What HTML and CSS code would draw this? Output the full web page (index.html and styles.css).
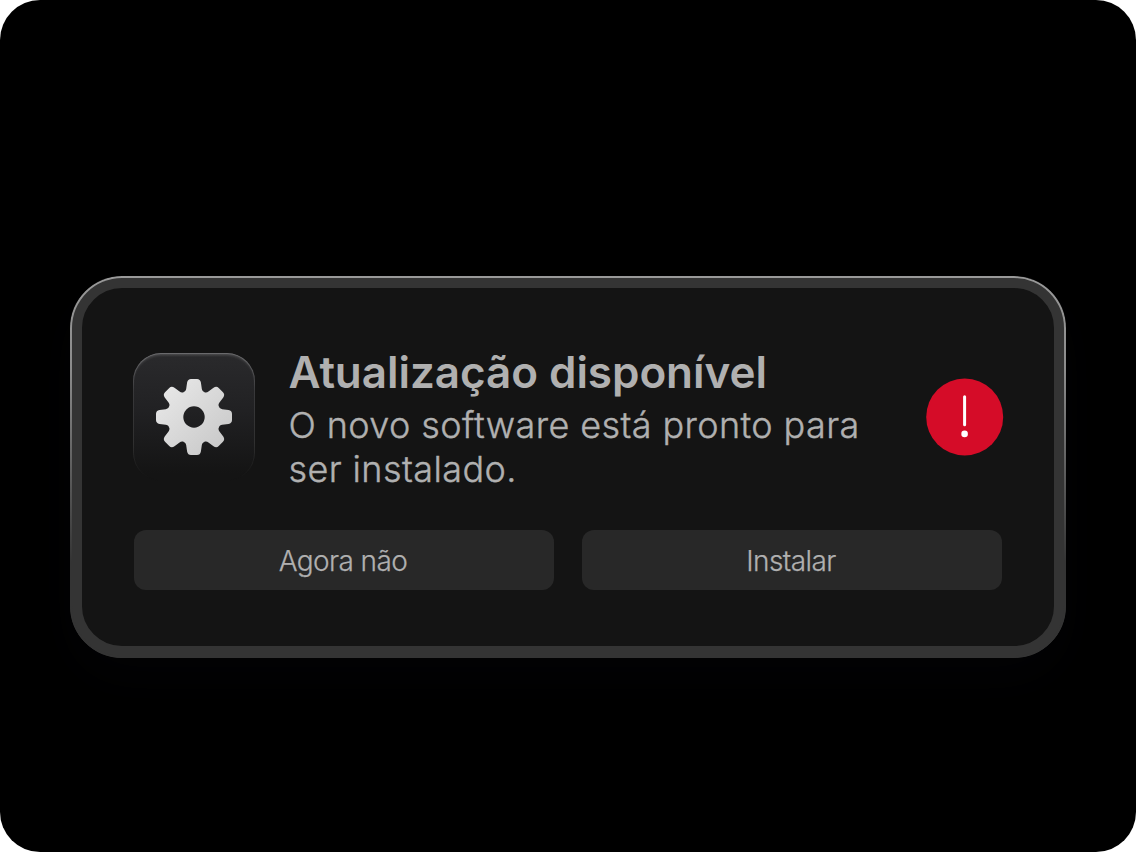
FILE: index.html
```html
<!doctype html>
<html lang="pt">
<head>
<meta charset="utf-8">
<title>Atualização disponível</title>
<link rel="stylesheet" href="styles.css">
</head>

<body>
<div class="screen">
	<div class="dialog">
		<div class="info">
			<div class="app-icon">
				<svg width="80" height="80" viewBox="-40 -40 80 80">
					<defs>
						<linearGradient id="metal" x1="0" y1="0" x2="1" y2="1">
							<stop offset="0.15" stop-color="#e6e6e6"/>
							<stop offset="0.5" stop-color="#d8d8d8"/>
							<stop offset="0.85" stop-color="#cacaca"/>
						</linearGradient>
						<path id="tooth" d="M0 0L-10.4 -25C-8.8 -25.2 -8 -26.8 -7.8 -28.2L-6.9 -34.5Q-6.2 -38 -3 -38H3Q6.2 -38 6.9 -34.5L7.8 -28.2C8 -26.8 8.8 -25.2 10.4 -25Z"/>
						<mask id="gear" maskUnits="userSpaceOnUse" x="-40" y="-40" width="80" height="80">
							<g fill="#fff">
								<circle r="26"/>
								<use href="#tooth"/>
								<use href="#tooth" transform="rotate(45)"/>
								<use href="#tooth" transform="rotate(90)"/>
								<use href="#tooth" transform="rotate(135)"/>
								<use href="#tooth" transform="rotate(180)"/>
								<use href="#tooth" transform="rotate(225)"/>
								<use href="#tooth" transform="rotate(270)"/>
								<use href="#tooth" transform="rotate(315)"/>
							</g>
							<circle r="10.7" fill="#000"/>
						</mask>
					</defs>
					<rect x="-40" y="-40" width="80" height="80" fill="url(#metal)" mask="url(#gear)"/>
				</svg>
			</div>
			<div class="text">
				<h1>Atualização disponível</h1>
				<p>O novo software está pronto para ser instalado.</p>
			</div>
			<svg class="alert" width="78" height="78" viewBox="0 0 78 78">
				<circle cx="38.7" cy="39" r="38.5" fill="#d50c28"/>
				<path d="M38.6 18.7V46.7" stroke="#fff" stroke-width="3" stroke-linecap="round"/>
				<circle cx="38.6" cy="55.9" r="3.3" fill="#fff"/>
			</svg>
		</div>
		<div class="buttons">
			<button class="btn">Agora não</button>
			<button class="btn">Instalar</button>
		</div>
	</div>
</div>
</body>
</html>
```
FILE: styles.css
```css
*{ margin:0; padding:0; box-sizing:border-box;}
body{ background:#fff; font-family:Inter, "Liberation Sans", sans-serif; color:#b0b0b0;}
.screen{
	height:852px;
	padding:276px 70px 0;
	border-radius:40px;
	background:#000;
}
.dialog{
	position:relative;
	height:382px;
	padding:64px 50px 0 51px;
	border:12px solid #343434;
	border-radius:52px;
	background:#141414;
	box-shadow:0 20px 50px rgba(10,10,16,.3);
}
/* light rim, fades towards the bottom */
.dialog:before,.app-icon:before{
	content:"";
	position:absolute;
	inset:-12px;
	padding:2px;
	border-radius:52px;
	background:linear-gradient(#999,#8b8b8b 25%,#343434 75%);
	mask:linear-gradient(#000 0 0) content-box exclude, linear-gradient(#000 0 0);
	pointer-events:none;
}
.info{ display:flex; align-items:flex-start; height:178px;}
.app-icon{
	position:relative;
	display:flex;
	align-items:center;
	justify-content:center;
	flex:none;
	width:122px;
	height:128px;
	margin-top:1px;
	border-radius:28px;
	background:linear-gradient(#2a2a2c,#212123 45%,#141414 94%);
	box-shadow:inset 0 3px 3px -1px rgba(255,255,255,.2);
}
.app-icon:before{
	inset:0;
	padding:1px;
	border-radius:28px;
	background:linear-gradient(#6a6a6c,#38383a 30%,#303030 70%,#141414 97%);
}
.text{ width:600px; margin-left:33.5px;}
h1{ font-size:44px; line-height:44px; font-weight:600; letter-spacing:-.05px; white-space:nowrap; margin-top:-2px;}
/* light weight with a thin stroke, sits between light and regular */
p{ font-size:36px; line-height:44px; font-weight:300; letter-spacing:.39px; margin-top:9px; -webkit-text-stroke:.4px #b0b0b0;}
.alert{ margin:26px 0 0 auto; flex:none;}
.buttons{ display:flex; gap:28px; margin:0 2px 0 1px;}
.btn{
	flex:1;
	height:60px;
	border:0;
	border-radius:12px;
	background:#282828;
	color:#b0b0b0;
	font:300 28px/60px Inter, "Liberation Sans", sans-serif;
	letter-spacing:-.6px;
	-webkit-text-stroke:.25px #b0b0b0;
	padding:1px 2px 0 0;
}
```
